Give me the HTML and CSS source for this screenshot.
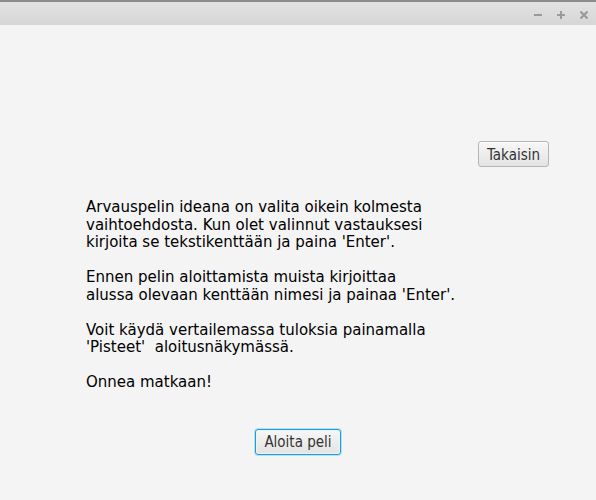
FILE: index.html
```
<!DOCTYPE html>
<html lang="fi">
<head>
<meta charset="utf-8">
<title>Arvauspeli</title>
<link rel="stylesheet" href="styles.css">
</head>
<body>
<div class="window">
  <header class="titlebar">
    <div class="controls">
      <svg class="ctl" width="10" height="10" viewBox="0 0 10 10"><rect x="1" y="4" width="8" height="2" fill="#9a9a9a"/></svg>
      <svg class="ctl" width="10" height="10" viewBox="0 0 10 10"><rect x="1" y="4" width="8" height="2" fill="#9a9a9a"/><rect x="4" y="1" width="2" height="8" fill="#9a9a9a"/></svg>
      <svg class="ctl" width="10" height="10" viewBox="0 0 10 10"><path d="M1.5 1.5 L8.5 8.5 M8.5 1.5 L1.5 8.5" stroke="#9a9a9a" stroke-width="2.2"/></svg>
    </div>
  </header>
  <main class="content">
    <div class="toprow">
      <button class="btn">Takaisin</button>
    </div>
    <div class="info">
      <p>Arvauspelin ideana on valita oikein kolmesta<br>vaihtoehdosta. Kun olet valinnut vastauksesi<br>kirjoita se tekstikenttään ja paina 'Enter'.</p>
      <p>Ennen pelin aloittamista muista kirjoittaa<br>alussa olevaan kenttään nimesi ja painaa 'Enter'.</p>
      <p>Voit käydä vertailemassa tuloksia painamalla<br>'Pisteet'&nbsp; aloitusnäkymässä.</p>
      <p>Onnea matkaan!</p>
    </div>
    <div class="bottomrow">
      <button class="btn focused">Aloita peli</button>
    </div>
  </main>
</div>
</body>
</html>
```
FILE: styles.css
```
* { box-sizing: border-box; }
html, body {
  margin: 0;
  padding: 0;
  width: 596px;
  height: 500px;
  overflow: hidden;
  background: #f4f4f4;
  font-family: "DejaVu Sans", sans-serif;
}
.window {
  display: flex;
  flex-direction: column;
  height: 500px;
}
.titlebar {
  height: 25px;
  flex: none;
  border-top: 2px solid #8a8a8a;
  background: linear-gradient(#e2e2e2, #d6d6d6);
  display: flex;
  justify-content: flex-end;
  align-items: center;
}
.controls {
  display: flex;
  gap: 13px;
  padding-right: 7px;
  padding-top: 2px;
}
.ctl { display: block; }
.content {
  flex: 1;
  display: flex;
  flex-direction: column;
  background: #f4f4f4;
}
.toprow {
  display: flex;
  justify-content: flex-end;
  padding: 116px 47px 0 0;
}
.btn {
  height: 26px;
  padding: 1px 8px 0;
  font-family: "DejaVu Sans Condensed", "DejaVu Sans", sans-serif;
  font-stretch: condensed;
  font-size: 15px;
  color: #333333;
  border: 1px solid #b5b5b5;
  border-radius: 3px;
  background: linear-gradient(#f7f7f7, #e3e3e3);
  box-shadow: inset 0 1px 0 #fdfdfd;
}
.btn.focused {
  border: 1px solid #1b9ed6;
  box-shadow: 0 0 0 1px #b9dff2, inset 0 0 0 1px #e9f4fa;
}
.info {
  padding: 32px 0 0 86px;
  font-size: 15px;
  line-height: 17.5px;
  color: #000;
}
.info p {
  margin: 0 0 17.5px 0;
}
.info p:last-child { margin-bottom: 0; }
.bottomrow {
  display: flex;
  justify-content: center;
  padding-top: 37px;
}
```
